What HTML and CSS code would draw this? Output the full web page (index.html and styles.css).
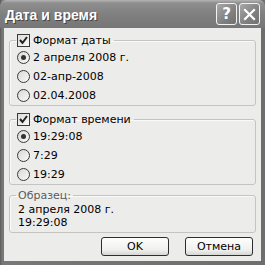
FILE: index.html
```html
<!DOCTYPE html>
<html lang="ru">
<head>
    <meta charset="UTF-8">
    <meta name="viewport" content="width=device-width, initial-scale=1.0">
    <title>Дата и время</title>
    <link rel="stylesheet" href="styles.css">
</head>
<body>
    <div class="window">
        <div class="titlebar">
            <span class="title">Дата и время</span>
            <div class="caption-buttons">
                <span class="cap-btn">?</span>
                <span class="cap-btn">
                    <svg width="13" height="13" viewBox="0 0 13 13">
                        <path d="M2 2 L11 11 M11 2 L2 11" stroke="#fff" stroke-width="2.2" stroke-linecap="square"/>
                    </svg>
                </span>
            </div>
        </div>
        <div class="client">
            <fieldset class="group">
                <legend><span class="check"><svg width="11" height="11" viewBox="0 0 11 11"><path d="M2 5 L4.5 8 L9 2" fill="none" stroke="#222" stroke-width="2"/></svg></span>Формат даты</legend>
                <div class="option"><span class="radio on"></span>2 апреля 2008 г.</div>
                <div class="option"><span class="radio"></span>02-апр-2008</div>
                <div class="option"><span class="radio"></span>02.04.2008</div>
            </fieldset>
            <fieldset class="group">
                <legend><span class="check"><svg width="11" height="11" viewBox="0 0 11 11"><path d="M2 5 L4.5 8 L9 2" fill="none" stroke="#222" stroke-width="2"/></svg></span>Формат времени</legend>
                <div class="option"><span class="radio on"></span>19:29:08</div>
                <div class="option"><span class="radio"></span>7:29</div>
                <div class="option"><span class="radio"></span>19:29</div>
            </fieldset>
            <fieldset class="group sample">
                <legend class="muted">Образец:</legend>
                <div class="line">2 апреля 2008 г.</div>
                <div class="line">19:29:08</div>
            </fieldset>
            <div class="actions">
                <button>OK</button>
                <button>Отмена</button>
            </div>
        </div>
    </div>
</body>
</html>
```

FILE: styles.css
```css
body {
    margin: 0;
    padding: 0;
    font-family: "DejaVu Sans", sans-serif;
    font-size: 11px;
    color: #000;
}
.window {
    width: 265px;
    height: 265px;
    box-sizing: border-box;
    display: flex;
    flex-direction: column;
    padding: 0 4px 4px 4px;
    background: linear-gradient(90deg, #5a5a5a, #787878 2px, #6e6e6e);
}
.titlebar {
    height: 28px;
    margin: 0 -4px;
    padding: 0 5px 0 5px;
    display: flex;
    align-items: center;
    justify-content: space-between;
    background: linear-gradient(#b4b4b4, #8e8e8e 3px, #808080 50%, #767676);
    border-radius: 6px 6px 0 0;
}
.title {
    color: #fff;
    font-family: "Liberation Sans", sans-serif;
    font-weight: bold;
    font-size: 14px;
    text-shadow: 1px 1px 0 #444;
    padding-top: 1px;
}
.caption-buttons {
    display: flex;
    gap: 2px;
}
.cap-btn {
    width: 19px;
    height: 20px;
    border: 1px solid #f2f2f2;
    border-radius: 3px;
    background: linear-gradient(135deg, #a8a8a8, #808080 60%, #707070);
    display: flex;
    align-items: center;
    justify-content: center;
    color: #fff;
    font-weight: bold;
    font-size: 15px;
}
.client {
    flex: 1;
    background: #ececea;
    padding: 5px 5px 0 5px;
    display: flex;
    flex-direction: column;
}
.group {
    margin: 0 0 6px 0;
    padding: 1px 6px 0 7px;
    border: 1px solid #c4c4c2;
    border-radius: 3px;
    box-shadow: inset 1px 1px 0 #fafafa;
}
.group legend {
    padding: 0 3px 0 1px;
    margin-left: -1px;
    display: flex;
    align-items: center;
    height: 14px;
}
.check {
    width: 11px;
    height: 11px;
    border: 1px solid #3a3a3a;
    background: linear-gradient(135deg, #dcdcdc, #fafafa);
    margin-right: 3px;
    display: inline-flex;
}
.option {
    height: 19px;
    display: flex;
    align-items: center;
}
.radio {
    width: 11px;
    height: 11px;
    border: 1px solid #3a3a3a;
    border-radius: 50%;
    background: linear-gradient(135deg, #d8d8d8, #fafafa);
    margin-right: 3px;
    display: inline-flex;
    align-items: center;
    justify-content: center;
}
.radio.on::after {
    content: "";
    width: 5px;
    height: 5px;
    border-radius: 50%;
    background: #333;
}
.sample {
    margin: -3px 0 4px 0;
    padding: 1px 6px 3px 7px;
}
.sample legend {
    padding: 0 2px;
}
.muted {
    color: #5a5a5a;
}
.line {
    height: 13px;
    line-height: 13px;
    padding-left: 1px;
}
.actions {
    display: flex;
    justify-content: flex-end;
    gap: 16px;
    padding-right: 3px;
}
button {
    width: 68px;
    height: 19px;
    padding: 0;
    font-family: "DejaVu Sans", sans-serif;
    font-size: 11px;
    color: #000;
    border: 1px solid #2e2e2e;
    border-radius: 3px;
    background: linear-gradient(#fdfdfd, #f0f0ee 70%, #d6d6d4);
}
```
